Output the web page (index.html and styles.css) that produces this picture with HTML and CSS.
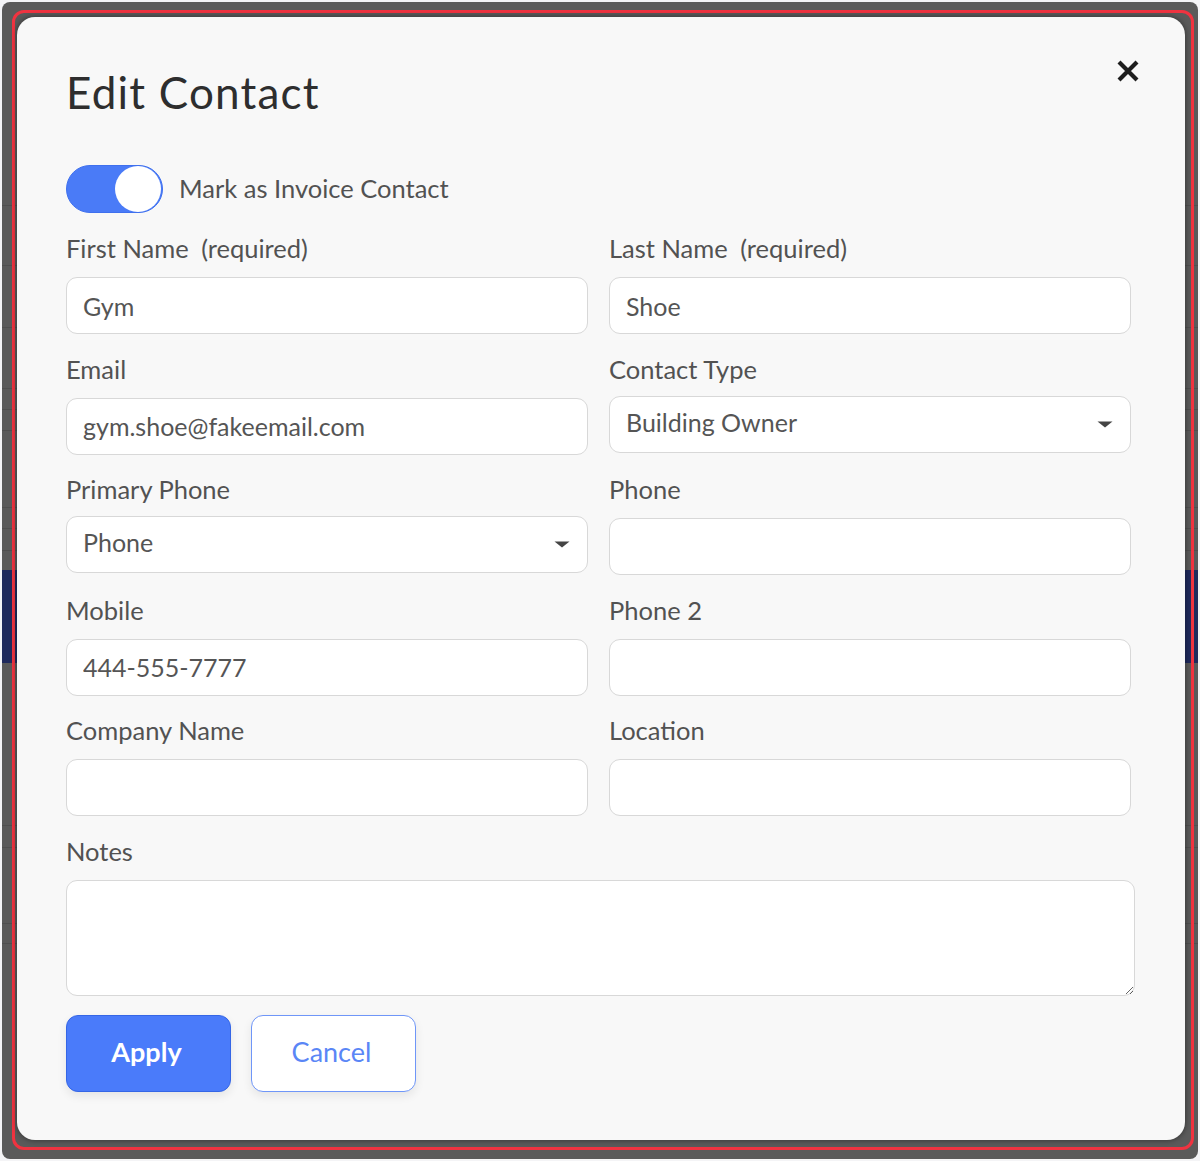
FILE: index.html
```html
<!DOCTYPE html>
<html lang="en">
<head>
<meta charset="utf-8">
<title>Edit Contact</title>
<link rel="stylesheet" href="styles.css">
</head>
<body>
<div class="screen">
  <div class="frame">
    <div class="modal">
      <button class="close" aria-label="Close">
        <svg width="24" height="24" viewBox="0 0 24 24"><path d="M3 3 L21 21 M21 3 L3 21" stroke="#1e1e1e" stroke-width="4.2" fill="none"/></svg>
      </button>
      <h1 class="title">Edit Contact</h1>

      <div class="toggle-row">
        <span class="toggle"><span class="knob"></span></span>
        <span class="toggle-label">Mark as Invoice Contact</span>
      </div>

      <div class="grid">
        <div class="field">
          <label class="label">First Name <span class="req">(required)</span></label>
          <input class="input" type="text" value="Gym">
        </div>
        <div class="field">
          <label class="label">Last Name <span class="req">(required)</span></label>
          <input class="input" type="text" value="Shoe">
        </div>

        <div class="field">
          <label class="label">Email</label>
          <input class="input" type="text" value="gym.shoe@fakeemail.com">
        </div>
        <div class="field">
          <label class="label">Contact Type</label>
          <div class="select">
            <select><option>Building Owner</option></select>
            <svg class="caret" width="16" height="7" viewBox="0 0 16 7"><path d="M0.5 0.5 H15.5 L8 6.5 Z" fill="#444"/></svg>
          </div>
        </div>

        <div class="field">
          <label class="label">Primary Phone</label>
          <div class="select">
            <select><option>Phone</option></select>
            <svg class="caret" width="16" height="7" viewBox="0 0 16 7"><path d="M0.5 0.5 H15.5 L8 6.5 Z" fill="#444"/></svg>
          </div>
        </div>
        <div class="field">
          <label class="label">Phone</label>
          <input class="input" type="text" value="">
        </div>

        <div class="field">
          <label class="label">Mobile</label>
          <input class="input" type="text" value="444-555-7777">
        </div>
        <div class="field">
          <label class="label">Phone 2</label>
          <input class="input" type="text" value="">
        </div>

        <div class="field">
          <label class="label">Company Name</label>
          <input class="input" type="text" value="">
        </div>
        <div class="field">
          <label class="label">Location</label>
          <input class="input" type="text" value="">
        </div>
      </div>

      <div class="notes">
        <label class="label">Notes</label>
        <textarea class="textarea"></textarea>
      </div>

      <div class="actions">
        <button class="btn btn-primary">Apply</button>
        <button class="btn btn-secondary">Cancel</button>
      </div>
    </div>
  </div>
</div>
</body>
</html>
```

FILE: styles.css
```css
* { box-sizing: border-box; }

html, body {
  margin: 0;
  padding: 0;
  background: #f4f4f6;
  font-family: Lato, "Open Sans", "Liberation Sans", sans-serif;
}

.screen {
  margin: 2px;
  width: 1196px;
  height: 1157px;
  border-radius: 8px;
  padding: 8px 4px 8px 10px;
  background-color: #5a5a5a;
  background-image:
    linear-gradient(to bottom,
      transparent 203px, #4f4f4f 203px, #4f4f4f 204px, transparent 204px,
      transparent 263px, #4f4f4f 263px, #4f4f4f 264px, transparent 264px,
      transparent 325px, #4f4f4f 325px, #4f4f4f 326px, transparent 326px,
      transparent 386px, #4f4f4f 386px, #4f4f4f 387px, transparent 387px,
      transparent 407px, #4f4f4f 407px, #4f4f4f 408px, transparent 408px,
      transparent 428px, #4f4f4f 428px, #4f4f4f 429px, transparent 429px,
      transparent 505px, #4f4f4f 505px, #4f4f4f 506px, transparent 506px,
      transparent 526px, #4f4f4f 526px, #4f4f4f 527px, transparent 527px,
      transparent 548px, #4f4f4f 548px, #4f4f4f 549px, transparent 549px,
      transparent 568px, #1f2a5c 568px, #1f2a5c 661px, transparent 661px,
      transparent 823px, #4f4f4f 823px, #4f4f4f 824px, transparent 824px,
      transparent 845px, #4f4f4f 845px, #4f4f4f 846px, transparent 846px,
      transparent 921px, #4f4f4f 921px, #4f4f4f 922px, transparent 922px,
      transparent 941px, #4f4f4f 941px, #4f4f4f 942px, transparent 942px);
}

.frame {
  height: 1140px;
  border: 3px solid #ef3340;
  border-radius: 12px;
  padding: 4px 6px 7px 2px;
}

.modal {
  position: relative;
  height: 1123px;
  background: #f8f8f8;
  border-radius: 18px;
  padding: 49px 50px 0 49px;
  box-shadow: 0 0 5px 1px rgba(0, 0, 0, 0.35);
}

.close {
  position: absolute;
  top: 42px;
  right: 45px;
  width: 24px;
  height: 24px;
  padding: 0;
  border: 0;
  background: transparent;
}
.close svg { display: block; }

.title {
  margin: 0;
  font-size: 44px;
  line-height: 53px;
  font-weight: 400;
  letter-spacing: 1.2px;
  color: #2e2e2e;
}

.toggle-row {
  margin-top: 46px;
  display: flex;
  align-items: center;
  height: 48px;
}

.toggle {
  display: flex;
  justify-content: flex-end;
  align-items: center;
  width: 97px;
  height: 48px;
  padding: 1px;
  border-radius: 24px;
  background: #4a7bf7;
  border: 1px solid #3f70ee;
}

.knob {
  width: 46px;
  height: 46px;
  border-radius: 50%;
  background: #fff;
}

.toggle-label {
  margin-left: 16px;
  font-size: 25.5px;
  color: #525252;
  padding-bottom: 2px;
}

.grid {
  margin-top: 22px;
  display: grid;
  grid-template-columns: 522px 522px;
  column-gap: 21px;
  row-gap: 21.5px;
}

.field, .notes {
  display: flex;
  flex-direction: column;
}

.label {
  font-size: 25.5px;
  line-height: 26px;
  height: 30px;
  color: #525252;
  margin-bottom: 12px;
}
.req { margin-left: 6px; }

.input, .select select, .textarea {
  font-family: Lato, "Open Sans", "Liberation Sans", sans-serif;
  font-size: 25px;
  color: #555;
  background: #fff;
  border: 1px solid #d8d8d8;
  border-radius: 11px;
  outline: none;
}

.input {
  height: 57px;
  padding: 0 16px;
}

.select {
  position: relative;
  margin-top: -2px;
  margin-bottom: 2px;
}

.select select {
  -webkit-appearance: none;
  appearance: none;
  width: 100%;
  height: 57px;
  padding: 0 16px 5px;
}

.caret {
  position: absolute;
  right: 18px;
  top: 25px;
}

.notes { margin-top: 21.5px; }

.textarea {
  width: 1069px;
  height: 116px;
  padding: 12px 16px;
  resize: both;
}

.actions {
  margin-top: 19px;
  display: flex;
  gap: 20px;
}

.btn {
  width: 165px;
  height: 77px;
  border-radius: 12px;
  font-family: Lato, "Open Sans", "Liberation Sans", sans-serif;
  font-size: 27px;
  padding: 0 4px 4px 0;
  box-shadow: 0 4px 10px rgba(0, 0, 0, 0.08);
}

.btn-primary {
  background: #4a7bfa;
  border: 1px solid #3566e6;
  color: #fff;
  font-weight: 700;
}

.btn-secondary {
  background: #fff;
  border: 1.5px solid #6f96f8;
  color: #5a86f6;
  font-weight: 400;
}
```
